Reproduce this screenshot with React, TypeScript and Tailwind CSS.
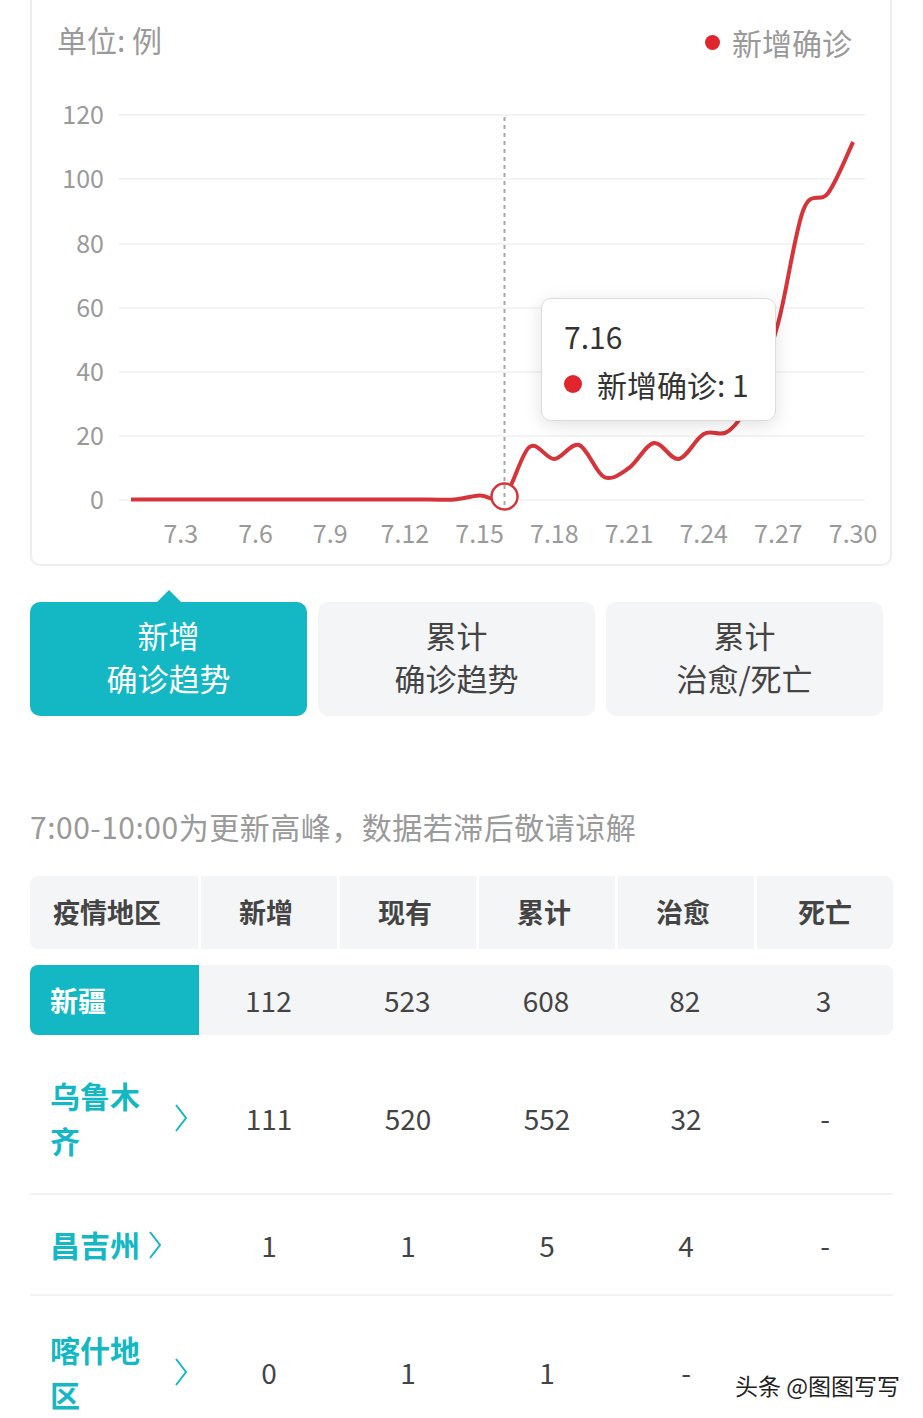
import React from "react";

const pointY = [
  499.5, 499.5, 499.5, 499.5, 499.5, 499.5, 499.5, 499.5, 499.5, 499.5, 499.5, 499.5, 499.5, 499.5,
  495.5, 496.5, 447, 459, 445, 477, 468, 443, 459, 434, 431, 395, 322, 210, 193, 142,
];

const dayX = (d: number) => 131 + (d - 1) * 24.9;

function smoothPath(pts: [number, number][]) {
  let d = `M${pts[0][0]},${pts[0][1]}`;
  for (let i = 0; i < pts.length - 1; i++) {
    const p0 = pts[i - 1] || pts[i];
    const p1 = pts[i];
    const p2 = pts[i + 1];
    const p3 = pts[i + 2] || p2;
    const c1x = p1[0] + (p2[0] - p0[0]) / 6;
    const c1y = p1[1] + (p2[1] - p0[1]) / 6;
    const c2x = p2[0] - (p3[0] - p1[0]) / 6;
    const c2y = p2[1] - (p3[1] - p1[1]) / 6;
    d += ` C${c1x},${c1y} ${c2x},${c2y} ${p2[0]},${p2[1]}`;
  }
  return d;
}

const gridRows = [
  { label: "120", y: 115 },
  { label: "100", y: 179 },
  { label: "80", y: 244 },
  { label: "60", y: 308 },
  { label: "40", y: 372 },
  { label: "20", y: 436 },
  { label: "0", y: 500 },
];

function TrendChart() {
  const pts = pointY.map((y, i) => [dayX(i + 1), y] as [number, number]);
  return (
    <svg width="858" height="479" viewBox="32 85 858 479" className="block">
      {gridRows.map((g) => (
        <g key={g.label}>
          <line x1="118" x2="865" y1={g.y} y2={g.y} stroke="#f0f0f0" strokeWidth="1.5" />
          <text x="104" y={g.y - 2} textAnchor="end" dominantBaseline="central" fill="#9a9a9a" fontSize="25">
            {g.label}
          </text>
        </g>
      ))}
      {[3, 6, 9, 12, 15, 18, 21, 24, 27, 30].map((d) => (
        <text key={d} x={dayX(d)} y="532" textAnchor="middle" dominantBaseline="central" fill="#9a9a9a" fontSize="25">
          {`7.${d}`}
        </text>
      ))}
      <path d={smoothPath(pts)} fill="none" stroke="#d5353a" strokeWidth="4" strokeLinejoin="round" />
      <circle cx={dayX(16)} cy="496.5" r="13" fill="#fff" stroke="#d5353a" strokeWidth="2.5" />
      <line x1={dayX(16)} x2={dayX(16)} y1="117" y2="505" stroke="#a8a8a8" strokeWidth="2" strokeDasharray="4 4" />
    </svg>
  );
}

function Chevron() {
  return (
    <svg width="14" height="30" viewBox="0 0 14 30" className="shrink-0 ml-[8px]">
      <polyline points="2,2 12,15 2,28" fill="none" stroke="#13b8c4" strokeWidth="2" />
    </svg>
  );
}

const rows = [
  { name: "乌鲁木齐", vals: ["111", "520", "552", "32", "-"], h: "h-[160px] pt-[8px]" },
  { name: "昌吉州", vals: ["1", "1", "5", "4", "-"], h: "h-[101px]" },
  { name: "喀什地区", vals: ["0", "1", "1", "-", ""], h: "h-[150px] pt-[4px]" },
];

export default function App() {
  return (
    <div className="relative w-[923px] h-[1418px] overflow-hidden bg-white font-['Noto_Sans_CJK_SC','Noto_Sans',sans-serif]">
      {/* chart card */}
      <div className="relative ml-[30px] w-[862px] border-x-2 border-b-2 border-[#eeeeee] rounded-b-[10px]">
        <div className="flex h-[85px] items-center justify-between pl-[25px] pr-[38px] pb-[6px]">
          <span className="text-[30px] text-[#9a9a9a]">单位: 例</span>
          <div className="flex items-center gap-[12px] pt-[6px]">
            <span className="h-[15px] w-[15px] rounded-full bg-[#e0262c]" />
            <span className="text-[30px] text-[#9a9a9a]">新增确诊</span>
          </div>
        </div>
        <TrendChart />
        <div className="absolute left-[509px] top-[298px] h-[123px] w-[235px] rounded-[10px] border-[1.5px] border-[#dcdcdc] bg-white px-[22px] pt-[17px] shadow-[0_4px_18px_rgba(0,0,0,0.12)]">
          <div className="text-[30px] leading-[40px] text-[#333]">7.16</div>
          <div className="mt-[8px] flex items-center gap-[15px] text-[30px] leading-[40px] text-[#333]">
            <span className="h-[18px] w-[18px] rounded-full bg-[#e0262c]" />
            <span>新增确诊: 1</span>
          </div>
        </div>
      </div>

      {/* tabs */}
      <div className="mt-[36px] ml-[30px] grid w-[853px] grid-cols-3 gap-[11px]">
        <div className="relative flex h-[114px] flex-col items-center justify-center rounded-[10px] bg-[#13b8c4] pb-[7px] text-[31px] leading-[43px] text-white">
          <span className="absolute left-1/2 top-[-12px] h-0 w-0 -translate-x-1/2 border-x-[12px] border-b-[12px] border-x-transparent border-b-[#13b8c4]" />
          <span>新增</span>
          <span>确诊趋势</span>
        </div>
        <div className="flex h-[114px] flex-col items-center justify-center rounded-[10px] bg-[#f4f5f7] pb-[7px] text-[31px] leading-[43px] text-[#444]">
          <span>累计</span>
          <span>确诊趋势</span>
        </div>
        <div className="flex h-[114px] flex-col items-center justify-center rounded-[10px] bg-[#f4f5f7] pb-[7px] text-[31px] leading-[43px] text-[#444]">
          <span>累计</span>
          <span>治愈/死亡</span>
        </div>
      </div>

      <p className="mt-[90px] ml-[30px] text-[30px] leading-[40px] tracking-[0.5px] text-[#9a9a9a]">7:00-10:00为更新高峰，数据若滞后敬请谅解</p>

      {/* table */}
      <div className="mt-[30px] ml-[30px] w-[863px]">
        <div className="grid h-[75px] grid-cols-[168px_repeat(5,1fr)] gap-x-[3px] pb-[2px] text-[27px] font-bold text-[#444]">
          <div className="flex items-center rounded-l-[8px] bg-[#f4f5f7] pl-[23px]">疫情地区</div>
          {["新增", "现有", "累计", "治愈"].map((h) => (
            <div key={h} className="flex items-center justify-center bg-[#f4f5f7] pr-[6px]">{h}</div>
          ))}
          <div className="flex items-center justify-center rounded-r-[8px] bg-[#f4f5f7]">死亡</div>
        </div>

        <div className="mt-[14px] grid h-[70px] grid-cols-[169px_repeat(5,1fr)] overflow-hidden rounded-[8px] bg-[#f4f5f7] text-[28px] text-[#444]">
          <div className="flex items-center bg-[#13b8c4] pl-[20px] font-bold text-white">新疆</div>
          {["112", "523", "608", "82", "3"].map((v, i) => (
            <div key={i} className="flex items-center justify-center">{v}</div>
          ))}
        </div>

        {rows.map((r) => (
          <div key={r.name} className={`grid grid-cols-[168px_repeat(5,1fr)] gap-x-[3px] border-b-2 border-[#f2f2f2] text-[28px] text-[#444] ${r.h}`}>
            <div className="flex items-center pl-[20px]">
              <span className="max-w-[116px] text-[30px] font-bold leading-[45px] text-[#13b8c4]">{r.name}</span>
              <Chevron />
            </div>
            {r.vals.map((v, i) => (
              <div key={i} className="flex items-center justify-center">{v}</div>
            ))}
          </div>
        ))}
      </div>

      <div className="absolute left-[735px] top-[1369px] text-[23px] leading-[32px] text-[#222] [text-shadow:1px_1px_0_#fff,-1px_-1px_0_#fff,0_0_3px_#fff]">
        头条 @图图写写
      </div>
    </div>
  );
}
